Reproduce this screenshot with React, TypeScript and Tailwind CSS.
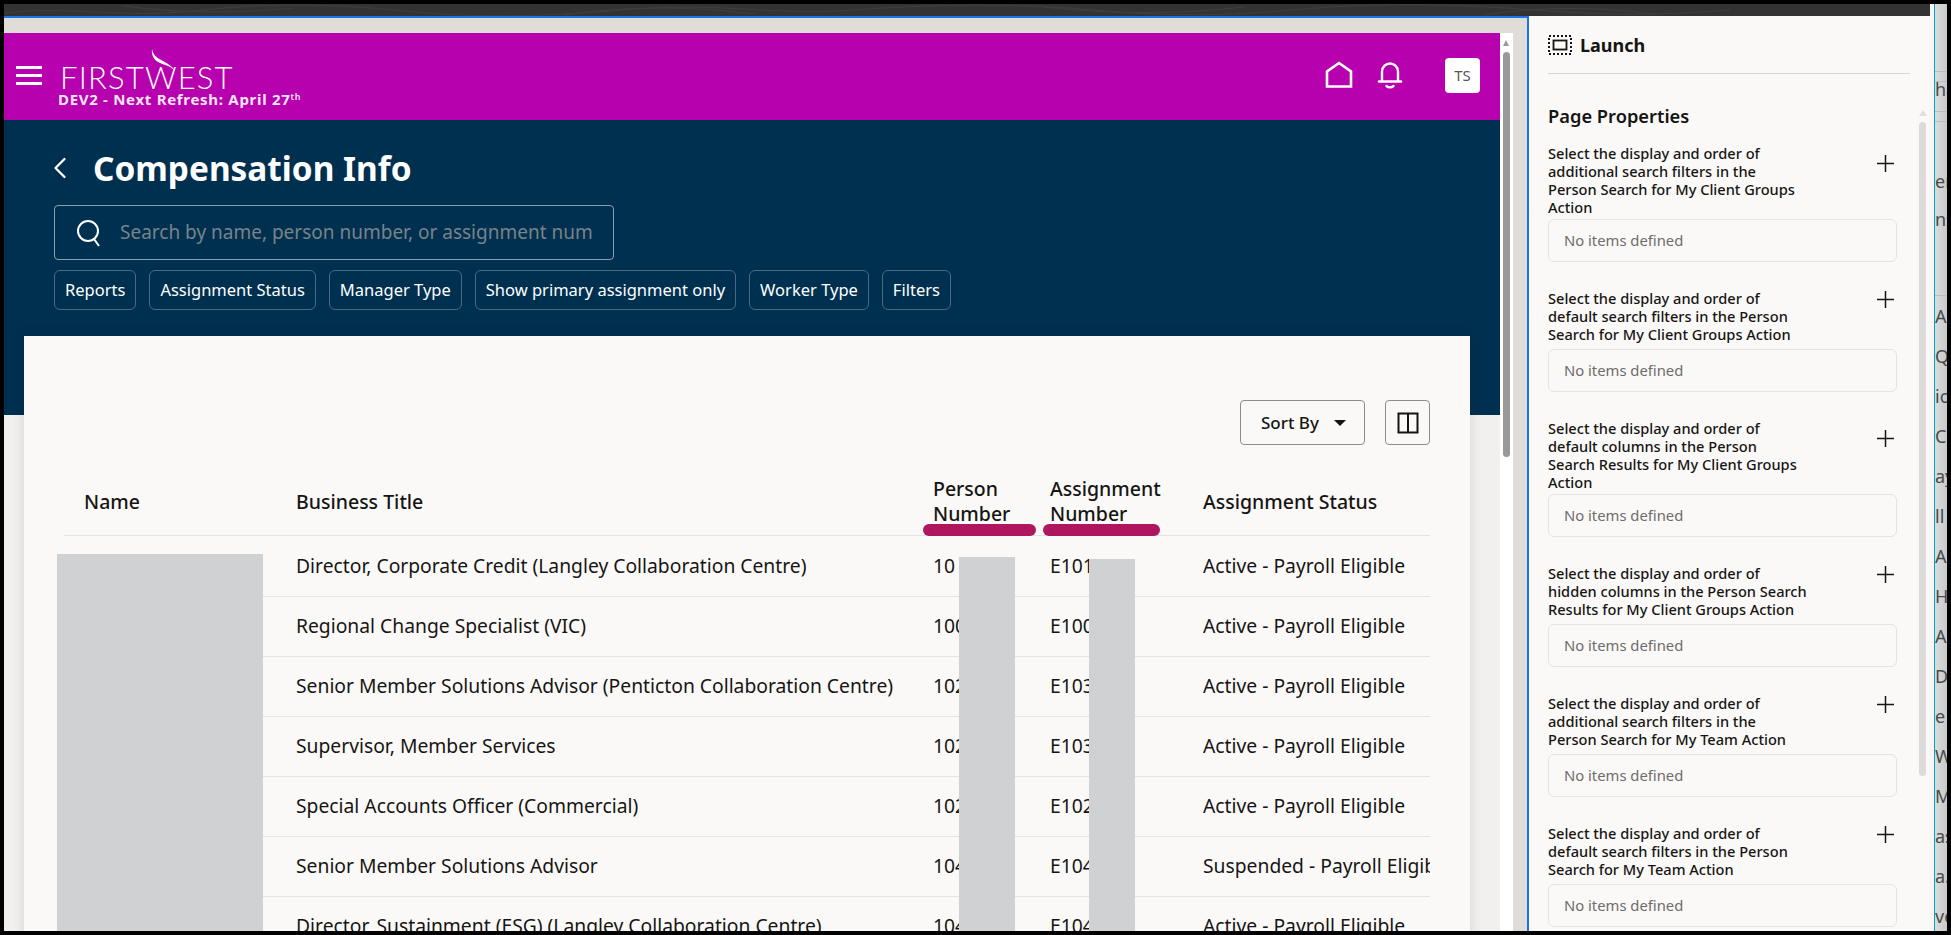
import { ChevronLeft } from "lucide-react";

const rows = [
  ["Director, Corporate Credit (Langley Collaboration Centre)", "10", "E101", "Active - Payroll Eligible"],
  ["Regional Change Specialist (VIC)", "100", "E100", "Active - Payroll Eligible"],
  ["Senior Member Solutions Advisor (Penticton Collaboration Centre)", "102", "E103", "Active - Payroll Eligible"],
  ["Supervisor, Member Services", "102", "E103", "Active - Payroll Eligible"],
  ["Special Accounts Officer (Commercial)", "102", "E102", "Active - Payroll Eligible"],
  ["Senior Member Solutions Advisor", "104", "E104", "Suspended - Payroll Eligible"],
  ["Director, Sustainment (ESG) (Langley Collaboration Centre)", "104", "E104", "Active - Payroll Eligible"],
];

const chips = ["Reports", "Assignment Status", "Manager Type", "Show primary assignment only", "Worker Type", "Filters"];

const properties = [
  ["Select the display and order of", "additional search filters in the", "Person Search for My Client Groups", "Action"],
  ["Select the display and order of", "default search filters in the Person", "Search for My Client Groups Action"],
  ["Select the display and order of", "default columns in the Person", "Search Results for My Client Groups", "Action"],
  ["Select the display and order of", "hidden columns in the Person Search", "Results for My Client Groups Action"],
  ["Select the display and order of", "additional search filters in the", "Person Search for My Team Action"],
  ["Select the display and order of", "default search filters in the Person", "Search for My Team Action"],
];

const edgeRows = ["Ap", "Q", "ic", "Co", "ay", "ll", "Ap", "Hig", "Ar", "D", "e", "W", "M", "as", "a..", "ve"];

function TopStrip() {
  return (
    <div className="h-[12px] bg-[#333333] overflow-hidden">
      <svg width="1926" height="12" fill="none" stroke="#3f3f3f" strokeWidth="1">
        <path d="M0 9c60-8 120 6 190-2s130-8 210 0 150 5 230-2 140 7 220 1 160-7 240 0 130 6 210-1 150-5 230 1 130 5 196 0" />
        <path d="M120 2c50 7 110 8 170 2M560 11c60-9 130-9 190-1M1040 3c70 8 140 7 200 0M1480 11c50-8 110-9 170-1" />
      </svg>
    </div>
  );
}

function FirstWestLogo() {
  return (
    <div className="relative ml-[18px] w-[250px] h-[56px]">
      <svg className="absolute left-[90px] top-0" width="30" height="30" viewBox="0 0 30 30" fill="white">
        <path d="M2 0c1 6 5 9 11 12 5 3 9 5 11 9-4-4-9-5-14-7C5 12 1 7 2 0z" />
      </svg>
      <div className="absolute left-0 top-[10px] font-['Lato'] font-light text-[31px] leading-[36px] tracking-[1.2px] text-white">
        FIRSTWEST
      </div>
      <div className="absolute left-[-2px] top-[41px] font-['Noto_Sans'] font-bold text-[15px] leading-[18px] tracking-[0.7px] text-[#fbe6fa] whitespace-nowrap">
        DEV2 - Next Refresh: April 27<sup className="text-[9px] font-semibold">th</sup>
      </div>
    </div>
  );
}

function AppHeader() {
  return (
    <header className="h-[87px] bg-[#b700ae] flex items-center pr-[20px]">
      <svg className="ml-[12px] mt-[-3px]" width="26" height="22" viewBox="0 0 26 22" fill="white">
        <rect y="2" width="26" height="3" />
        <rect y="10" width="26" height="3" />
        <rect y="18" width="26" height="3" />
      </svg>
      <FirstWestLogo />
      <svg className="ml-auto mt-[-3px]" width="28" height="28" viewBox="0 0 28 28" fill="none" stroke="white" strokeWidth="2.6">
        <path d="M2 25.5V10.5L14 2l12 8.5v15z" />
      </svg>
      <svg className="ml-[24px] mt-[-3px]" width="26" height="28" viewBox="0 0 26 28" fill="none" stroke="white" strokeWidth="2.4">
        <path d="M5 20V10.5a8 8 0 0 1 16 0V20" />
        <path d="M2 20.5h22" strokeLinecap="round" />
        <path d="M9.5 25c2 1.8 5 1.8 7 0" strokeLinecap="round" />
      </svg>
      <div className="ml-[42px] mt-[-3px] w-[35px] h-[35px] rounded-[4px] bg-white flex items-center justify-center font-['Noto_Sans'] text-[15px] text-[#555555]">
        TS
      </div>
    </header>
  );
}

function PageHero() {
  return (
    <section className="h-[295px] bg-[#00304f] pl-[50px] pt-[26px]">
      <div className="flex items-center h-[44px]">
        <ChevronLeft className="ml-[-12px] text-white" size={36} strokeWidth={1.5} />
        <h1 className="ml-[15px] font-bold text-[33.4px] leading-[44px] text-white">Compensation Info</h1>
      </div>
      <div className="mt-[15px] w-[560px] h-[55px] rounded-[4px] border border-[#8ba0ae] flex items-center pl-[21px] pr-[21px]">
        <svg width="26" height="28" viewBox="0 0 26 28" fill="none" stroke="white" strokeWidth="2">
          <circle cx="12" cy="12" r="10" />
          <path d="M18 20l5 7" />
        </svg>
        <input
          className="ml-[18px] flex-1 min-w-0 bg-transparent outline-none text-[19px] placeholder:text-[#78838a]"
          placeholder="Search by name, person number, or assignment number"
        />
      </div>
      <div className="mt-[10px] flex gap-[13px]">
        {chips.map((chip) => (
          <span
            key={chip}
            className="h-[40px] px-[10px] rounded-[6px] border border-[#4b6a80] flex items-center text-[16.5px] text-white whitespace-nowrap"
          >
            {chip}
          </span>
        ))}
      </div>
    </section>
  );
}

function PersonTable() {
  return (
    <div className="relative ml-[20px] mr-[30px] mt-[-79px] bg-[#faf9f8] shadow-[0_0_12px_rgba(0,0,0,0.12)] h-[600px] pt-[64px] pl-[40px] pr-[40px]">
      <div className="flex justify-end gap-[20px]">
        <button className="w-[125px] h-[45px] rounded-[4px] border border-[#8f8c88] flex items-center pl-[20px] text-[17px] font-medium text-[#161513]">
          Sort By
          <span className="ml-[15px] w-0 h-0 border-x-[6px] border-x-transparent border-t-[6px] border-t-[#161513]" />
        </button>
        <button className="w-[45px] h-[45px] rounded-[4px] border border-[#8f8c88] flex items-center justify-center">
          <svg width="22" height="22" viewBox="0 0 22 22" fill="none" stroke="#161513" strokeWidth="2">
            <rect x="1.5" y="1.5" width="19" height="19" />
            <path d="M11 1.5v19" />
          </svg>
        </button>
      </div>

      <div className="mt-[25px] grid grid-cols-[232px_637px_117px_153px_227px] items-center h-[66px] pb-[3px] border-b border-[#e4e3e1] text-[19.5px] leading-[25px] font-medium text-[#161513]">
        <div className="pl-[20px]">Name</div>
        <div>Business Title</div>
        <div>Person<br />Number</div>
        <div>Assignment<br />Number</div>
        <div>Assignment Status</div>
      </div>
      <div className="pt-[1px]">
        {rows.map((row) => (
          <div
            key={row[0]}
            className="grid grid-cols-[232px_637px_117px_153px_227px] items-center h-[60px] border-b border-[#e4e3e1] text-[19.3px] text-[#161513] whitespace-nowrap overflow-hidden"
          >
            <div />
            <div>{row[0]}</div>
            <div>{row[1]}</div>
            <div>{row[2]}</div>
            <div className="overflow-hidden">{row[3]}</div>
          </div>
        ))}
      </div>

      <span className="absolute left-[899px] top-[188px] w-[113px] h-[12px] rounded-full bg-[#b0155f]" />
      <span className="absolute left-[1019px] top-[188px] w-[117px] h-[12px] rounded-full bg-[#b0155f]" />
      <span className="absolute left-[33px] top-[218px] w-[206px] h-[400px] bg-[#d0d1d3]" />
      <span className="absolute left-[935px] top-[221px] w-[56px] h-[400px] bg-[#d0d1d3]" />
      <span className="absolute left-[1065px] top-[223px] w-[46px] h-[400px] bg-[#d0d1d3]" />
    </div>
  );
}

function LaunchIcon() {
  return (
    <svg width="24" height="20" viewBox="0 0 24 20" fill="none" stroke="#161513">
      <rect x="1" y="1" width="22" height="18" strokeWidth="2" strokeDasharray="2 2" />
      <rect x="5.5" y="5.5" width="13" height="9" strokeWidth="1.8" />
    </svg>
  );
}

function PropertiesPanel() {
  return (
    <aside className="relative w-[401px] h-full bg-[#faf9f8] pl-[19px] overflow-hidden text-[#161513]">
      <div className="w-[362px] h-[58px] border-b border-[#d6d4d1] flex items-center gap-[8px] pt-[1px]">
        <LaunchIcon />
        <span className="text-[18px] font-bold">Launch</span>
      </div>
      <h2 className="mt-[28px] text-[18.3px] leading-[28px] font-semibold">Page Properties</h2>
      <div className="mt-[14px] w-[349px]">
        {properties.map((lines, i) => (
          <div key={i} className="mb-[27px]">
            <div className="flex items-center justify-between">
              <div className="text-[14.6px] leading-[18px] font-medium whitespace-nowrap">
                {lines.map((line) => (
                  <div key={line}>{line}</div>
                ))}
              </div>
              <svg className="mb-[33px] mr-[3px]" width="17" height="17" viewBox="0 0 17 17" stroke="#161513" strokeWidth="1.5">
                <path d="M8.5 0v17M0 8.5h17" />
              </svg>
            </div>
            <div className={`${lines.length === 4 ? "mt-[3px]" : "mt-[6px]"} h-[43px] rounded-[6px] border border-[#e4e3e1] flex items-center pl-[15px] text-[14.8px] text-[#6f6c69]`}>
              No items defined
            </div>
          </div>
        ))}
      </div>
      <div className="absolute left-[390px] top-[94px] w-0 h-0 border-x-[4px] border-x-transparent border-b-[6px] border-b-[#e0dfdd]" />
      <div className="absolute left-[390px] top-[106px] w-[7px] h-[654px] rounded-full bg-[#dcdbd9]" />
    </aside>
  );
}

function EdgeSliver() {
  return (
    <div className="w-[17px] h-full pl-[4px] bg-[#f6f6f5]">
      <div className="h-full border-l border-[#00a2d0] bg-gradient-to-r from-[#dcdcdc] to-[#c9c9c9] overflow-hidden whitespace-nowrap font-['Noto_Sans'] text-[18px] text-[#4a4a4a]">
        <div className="mt-[67px] h-[11px] border-y border-[#bdbdbd]" />
        <div className="h-[29px] leading-[14px]">ha</div>
        <div className="h-[11px] border-y border-[#bdbdbd]" />
        <div className="mt-[47px] h-[38px] leading-[24px]">er</div>
        <div className="h-[33px] leading-[24px]">ns</div>
        <div className="h-[56px] border-b border-[#bdbdbd]" />
        {edgeRows.map((text, i) => (
          <div key={i} className="h-[40px] leading-[40px]">{text}</div>
        ))}
      </div>
    </div>
  );
}

export default function App() {
  return (
    <div className="w-[1951px] h-[935px] bg-black p-[4px] flex overflow-hidden font-['Noto_Sans',sans-serif]">
      <div className="w-[1926px] h-full flex flex-col">
        <TopStrip />
        <div className="flex h-[915px]">
          <div className="w-[1525px] h-full border-t-2 border-r-2 border-[#1a73e8] bg-[#e0ddd8] pt-[15px] flex overflow-hidden">
            <main className="w-[1496px] h-full bg-[#f1f0ee] overflow-hidden">
              <AppHeader />
              <PageHero />
              <PersonTable />
            </main>
            <div className="w-[13px] h-full bg-white pl-[3px] pt-[7px]">
              <div className="w-0 h-0 border-x-[3.5px] border-x-transparent border-b-[6px] border-b-[#999999]" />
              <div className="mt-[6px] w-[7px] h-[405px] rounded-full bg-[#999999]" />
            </div>
          </div>
          <PropertiesPanel />
        </div>
      </div>
      <EdgeSliver />
    </div>
  );
}
